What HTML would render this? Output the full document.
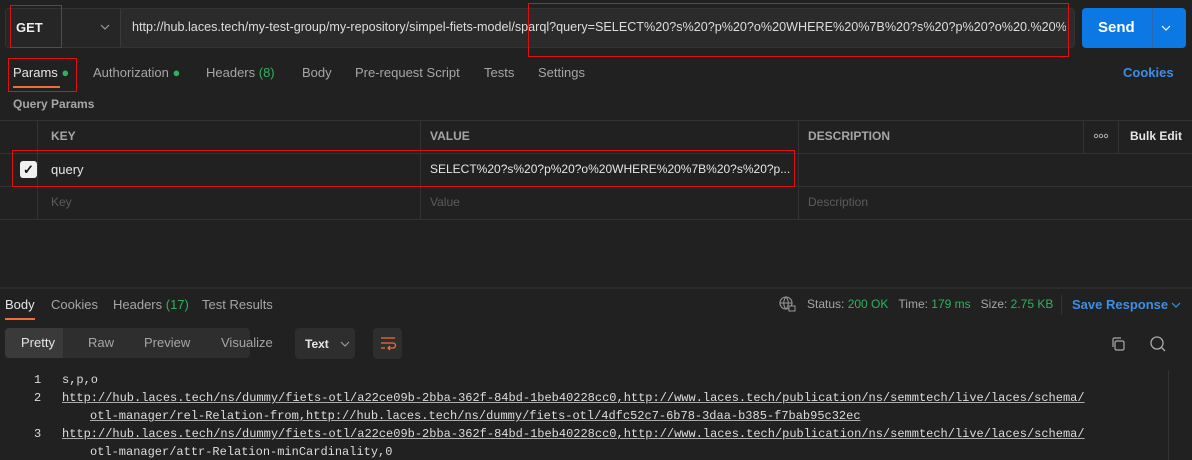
<!DOCTYPE html>
<html><head><style>
*{margin:0;padding:0;box-sizing:border-box}
body{width:1192px;height:460px;background:#212121;font-family:"Liberation Sans",sans-serif;color:#e6e6e6;position:relative;overflow:hidden;font-size:13px}
.a{position:absolute;white-space:nowrap}
.red{position:absolute;border:1.5px solid #e01010}
.g{color:#2fb35a}
.gr{color:#a6a6a6}
.line{position:absolute;background:#333}
.mono{font-family:"Liberation Mono",monospace;font-size:12px;color:#dcdcdc}
.u{text-decoration:underline;text-decoration-color:#aaa}
</style></head><body>
<!-- top bar -->
<div class="a" style="left:5px;top:8px;width:1070px;height:40px;border:1px solid #333;border-radius:4px;background:#262626"></div>
<div class="a" style="left:120px;top:9px;width:954px;height:38px;background:#2b2b2b;border-left:1px solid #3a3a3a"></div>
<div class="a" style="left:16px;top:20px;font-weight:bold;font-size:13px;color:#eee">GET</div>
<svg class="a" style="left:100px;top:23px" width="10" height="8" viewBox="0 0 10 8"><path d="M1 2l4 4 4-4" stroke="#999" fill="none" stroke-width="1.2"/></svg>
<div class="a" style="left:132px;top:20px;width:934px;overflow:hidden;font-size:12.6px;color:#ddd">http://hub.laces.tech/my-test-group/my-repository/simpel-fiets-model/sparql?query=SELECT%20?s%20?p%20?o%20WHERE%20%7B%20?s%20?p%20?o%20.%20%</div>
<div class="a" style="left:1082px;top:8px;width:104px;height:40px;background:#0b78e3;border-radius:4px"></div>
<div class="a" style="left:1152px;top:8px;width:1px;height:40px;background:#2a69b0"></div>
<div class="a" style="left:1098px;top:19px;font-weight:bold;font-size:15px;color:#fff">Send</div>
<svg class="a" style="left:1161px;top:24px" width="10" height="8" viewBox="0 0 10 8"><path d="M1 2l4 4 4-4" stroke="#fff" fill="none" stroke-width="1.2"/></svg>
<div class="red" style="left:10px;top:5px;width:52px;height:43px"></div>
<div class="red" style="left:528px;top:3px;width:541px;height:54px"></div>
<!-- tabs -->
<div class="a" style="left:13px;top:65px">Params <span class="g">&#9679;</span></div>
<div class="a" style="left:13px;top:86px;width:47px;height:2px;background:#f26b3a"></div>
<div class="a gr" style="left:93px;top:65px">Authorization <span class="g">&#9679;</span></div>
<div class="a gr" style="left:206px;top:65px">Headers <span class="g">(8)</span></div>
<div class="a gr" style="left:302px;top:65px">Body</div>
<div class="a gr" style="left:355px;top:65px">Pre-request Script</div>
<div class="a gr" style="left:484px;top:65px">Tests</div>
<div class="a gr" style="left:538px;top:65px">Settings</div>
<div class="a" style="left:1123px;top:65px;color:#3d8fe6;font-weight:bold">Cookies</div>
<div class="red" style="left:8px;top:58px;width:69px;height:34px"></div>
<div class="a gr" style="left:13px;top:97px;font-weight:bold;font-size:12px">Query Params</div>
<!-- table -->
<div class="line" style="left:0;top:120px;width:1192px;height:1px"></div>
<div class="line" style="left:0;top:153px;width:1192px;height:1px"></div>
<div class="line" style="left:0;top:186px;width:1192px;height:1px"></div>
<div class="line" style="left:0;top:219px;width:1192px;height:1px"></div>
<div class="line" style="left:37px;top:120px;width:1px;height:99px"></div>
<div class="line" style="left:420px;top:120px;width:1px;height:99px"></div>
<div class="line" style="left:798px;top:120px;width:1px;height:99px"></div>
<div class="line" style="left:1083px;top:120px;width:1px;height:33px"></div>
<div class="line" style="left:1118px;top:120px;width:1px;height:33px"></div>
<div class="a gr" style="left:51px;top:129px;font-weight:bold;font-size:12px">KEY</div>
<div class="a gr" style="left:430px;top:129px;font-weight:bold;font-size:12px">VALUE</div>
<div class="a gr" style="left:808px;top:129px;font-weight:bold;font-size:12px">DESCRIPTION</div>
<svg class="a" style="left:1093px;top:133px" width="16" height="6" viewBox="0 0 16 6"><circle cx="3" cy="3" r="1.7" stroke="#aaa" fill="none"/><circle cx="8" cy="3" r="1.7" stroke="#aaa" fill="none"/><circle cx="13" cy="3" r="1.7" stroke="#aaa" fill="none"/></svg>
<div class="a" style="left:1130px;top:129px;font-weight:bold;font-size:12px">Bulk Edit</div>
<div class="a" style="left:20px;top:161px;width:17px;height:17px;background:#f0f0f0;border-radius:3px;color:#111;font-size:13px;text-align:center;line-height:17px;font-weight:bold">&#10003;</div>
<div class="a" style="left:51px;top:162px">query</div>
<div class="a" style="left:430px;top:162px;font-size:12px">SELECT%20?s%20?p%20?o%20WHERE%20%7B%20?s%20?p...</div>
<div class="red" style="left:12px;top:150px;width:783px;height:37px"></div>
<div class="a" style="left:51px;top:195px;color:#5c5c5c;font-size:12px">Key</div>
<div class="a" style="left:430px;top:195px;color:#5c5c5c;font-size:12px">Value</div>
<div class="a" style="left:808px;top:195px;color:#5c5c5c;font-size:12px">Description</div>
<!-- response -->
<div class="line" style="left:0;top:287px;width:1192px;height:2px;background:#2c2c2c"></div>
<div class="a" style="left:5px;top:297px">Body</div>
<div class="a" style="left:5px;top:318px;width:30px;height:2px;background:#f26b3a"></div>
<div class="a gr" style="left:51px;top:297px">Cookies</div>
<div class="a gr" style="left:113px;top:297px">Headers <span class="g">(17)</span></div>
<div class="a gr" style="left:202px;top:297px">Test Results</div>
<svg class="a" style="left:778px;top:295px" width="18" height="18" viewBox="0 0 18 18"><circle cx="8" cy="8" r="6" stroke="#999" fill="none" stroke-width="1.1"/><path d="M2 8h12M8 2c-3 3-3 9 0 12M8 2c3 3 3 9 0 12" stroke="#999" fill="none" stroke-width="1"/><rect x="11" y="11" width="6" height="5" fill="#212121" stroke="#999"/></svg>
<div class="a gr" style="left:807px;top:297px;font-size:12px">Status: <span class="g">200 OK</span>&nbsp;&nbsp;&nbsp;Time: <span class="g">179 ms</span>&nbsp;&nbsp;&nbsp;Size: <span class="g">2.75 KB</span></div>
<div class="line" style="left:1061px;top:295px;width:1px;height:20px"></div>
<div class="a" style="left:1072px;top:297px;color:#3d8fe6;font-weight:bold">Save Response</div>
<svg class="a" style="left:1171px;top:301px" width="10" height="8" viewBox="0 0 10 8"><path d="M1 2l4 4 4-4" stroke="#3d8fe6" fill="none" stroke-width="1.2"/></svg>
<div class="a" style="left:5px;top:328px;width:245px;height:30px;background:#2e2e2e;border-radius:4px"></div>
<div class="a" style="left:5px;top:328px;width:58px;height:30px;background:#3a3a3a;border-radius:4px 0 0 4px"></div>
<div class="a" style="left:21px;top:335px">Pretty</div>
<div class="a gr" style="left:88px;top:335px">Raw</div>
<div class="a gr" style="left:144px;top:335px">Preview</div>
<div class="a gr" style="left:221px;top:335px">Visualize</div>
<div class="a" style="left:295px;top:328px;width:60px;height:31px;background:#2e2e2e;border-radius:4px"></div>
<div class="a" style="left:305px;top:337px;font-size:12px;font-weight:bold">Text</div>
<svg class="a" style="left:340px;top:340px" width="10" height="8" viewBox="0 0 10 8"><path d="M1 2l4 4 4-4" stroke="#999" fill="none" stroke-width="1.2"/></svg>
<div class="a" style="left:373px;top:328px;width:29px;height:31px;background:#2e2e2e;border-radius:4px"></div>
<svg class="a" style="left:378px;top:335px" width="20" height="16" viewBox="0 0 20 16"><path d="M3 3h14M3 8h12a2.5 2.5 0 0 1 0 5h-4M3 13h4M12 11l-2 2 2 2" stroke="#f26b3a" stroke-width="1.3" fill="none"/></svg>
<svg class="a" style="left:1110px;top:336px" width="16" height="16" viewBox="0 0 16 16"><rect x="5" y="5" width="9" height="9" rx="1.5" stroke="#aaa" fill="none" stroke-width="1.2"/><path d="M3 11V3.5A1.5 1.5 0 0 1 4.5 2H11" stroke="#aaa" fill="none" stroke-width="1.2"/></svg>
<svg class="a" style="left:1149px;top:335px" width="18" height="18" viewBox="0 0 18 18"><circle cx="8" cy="8" r="6" stroke="#aaa" fill="none" stroke-width="1.3"/><path d="M12.5 12.5L16 16" stroke="#aaa" stroke-width="1.3"/></svg>
<div class="line" style="left:1168px;top:370px;width:1px;height:90px;background:#333"></div>
<div class="a mono gr" style="left:34px;top:373px">1</div>
<div class="a mono gr" style="left:34px;top:391px">2</div>
<div class="a mono gr" style="left:34px;top:427px">3</div>
<div class="a mono" style="left:62px;top:373px">s,p,o</div>
<div class="a mono u" style="left:62px;top:391px">http://hub.laces.tech/ns/dummy/fiets-otl/a22ce09b-2bba-362f-84bd-1beb40228cc0,http://www.laces.tech/publication/ns/semmtech/live/laces/schema/</div>
<div class="a mono u" style="left:90px;top:409px">otl-manager/rel-Relation-from,http://hub.laces.tech/ns/dummy/fiets-otl/4dfc52c7-6b78-3daa-b385-f7bab95c32ec</div>
<div class="a mono u" style="left:62px;top:427px">http://hub.laces.tech/ns/dummy/fiets-otl/a22ce09b-2bba-362f-84bd-1beb40228cc0,http://www.laces.tech/publication/ns/semmtech/live/laces/schema/</div>
<div class="a mono" style="left:90px;top:445px">otl-manager/attr-Relation-minCardinality,0</div>
</body></html>
